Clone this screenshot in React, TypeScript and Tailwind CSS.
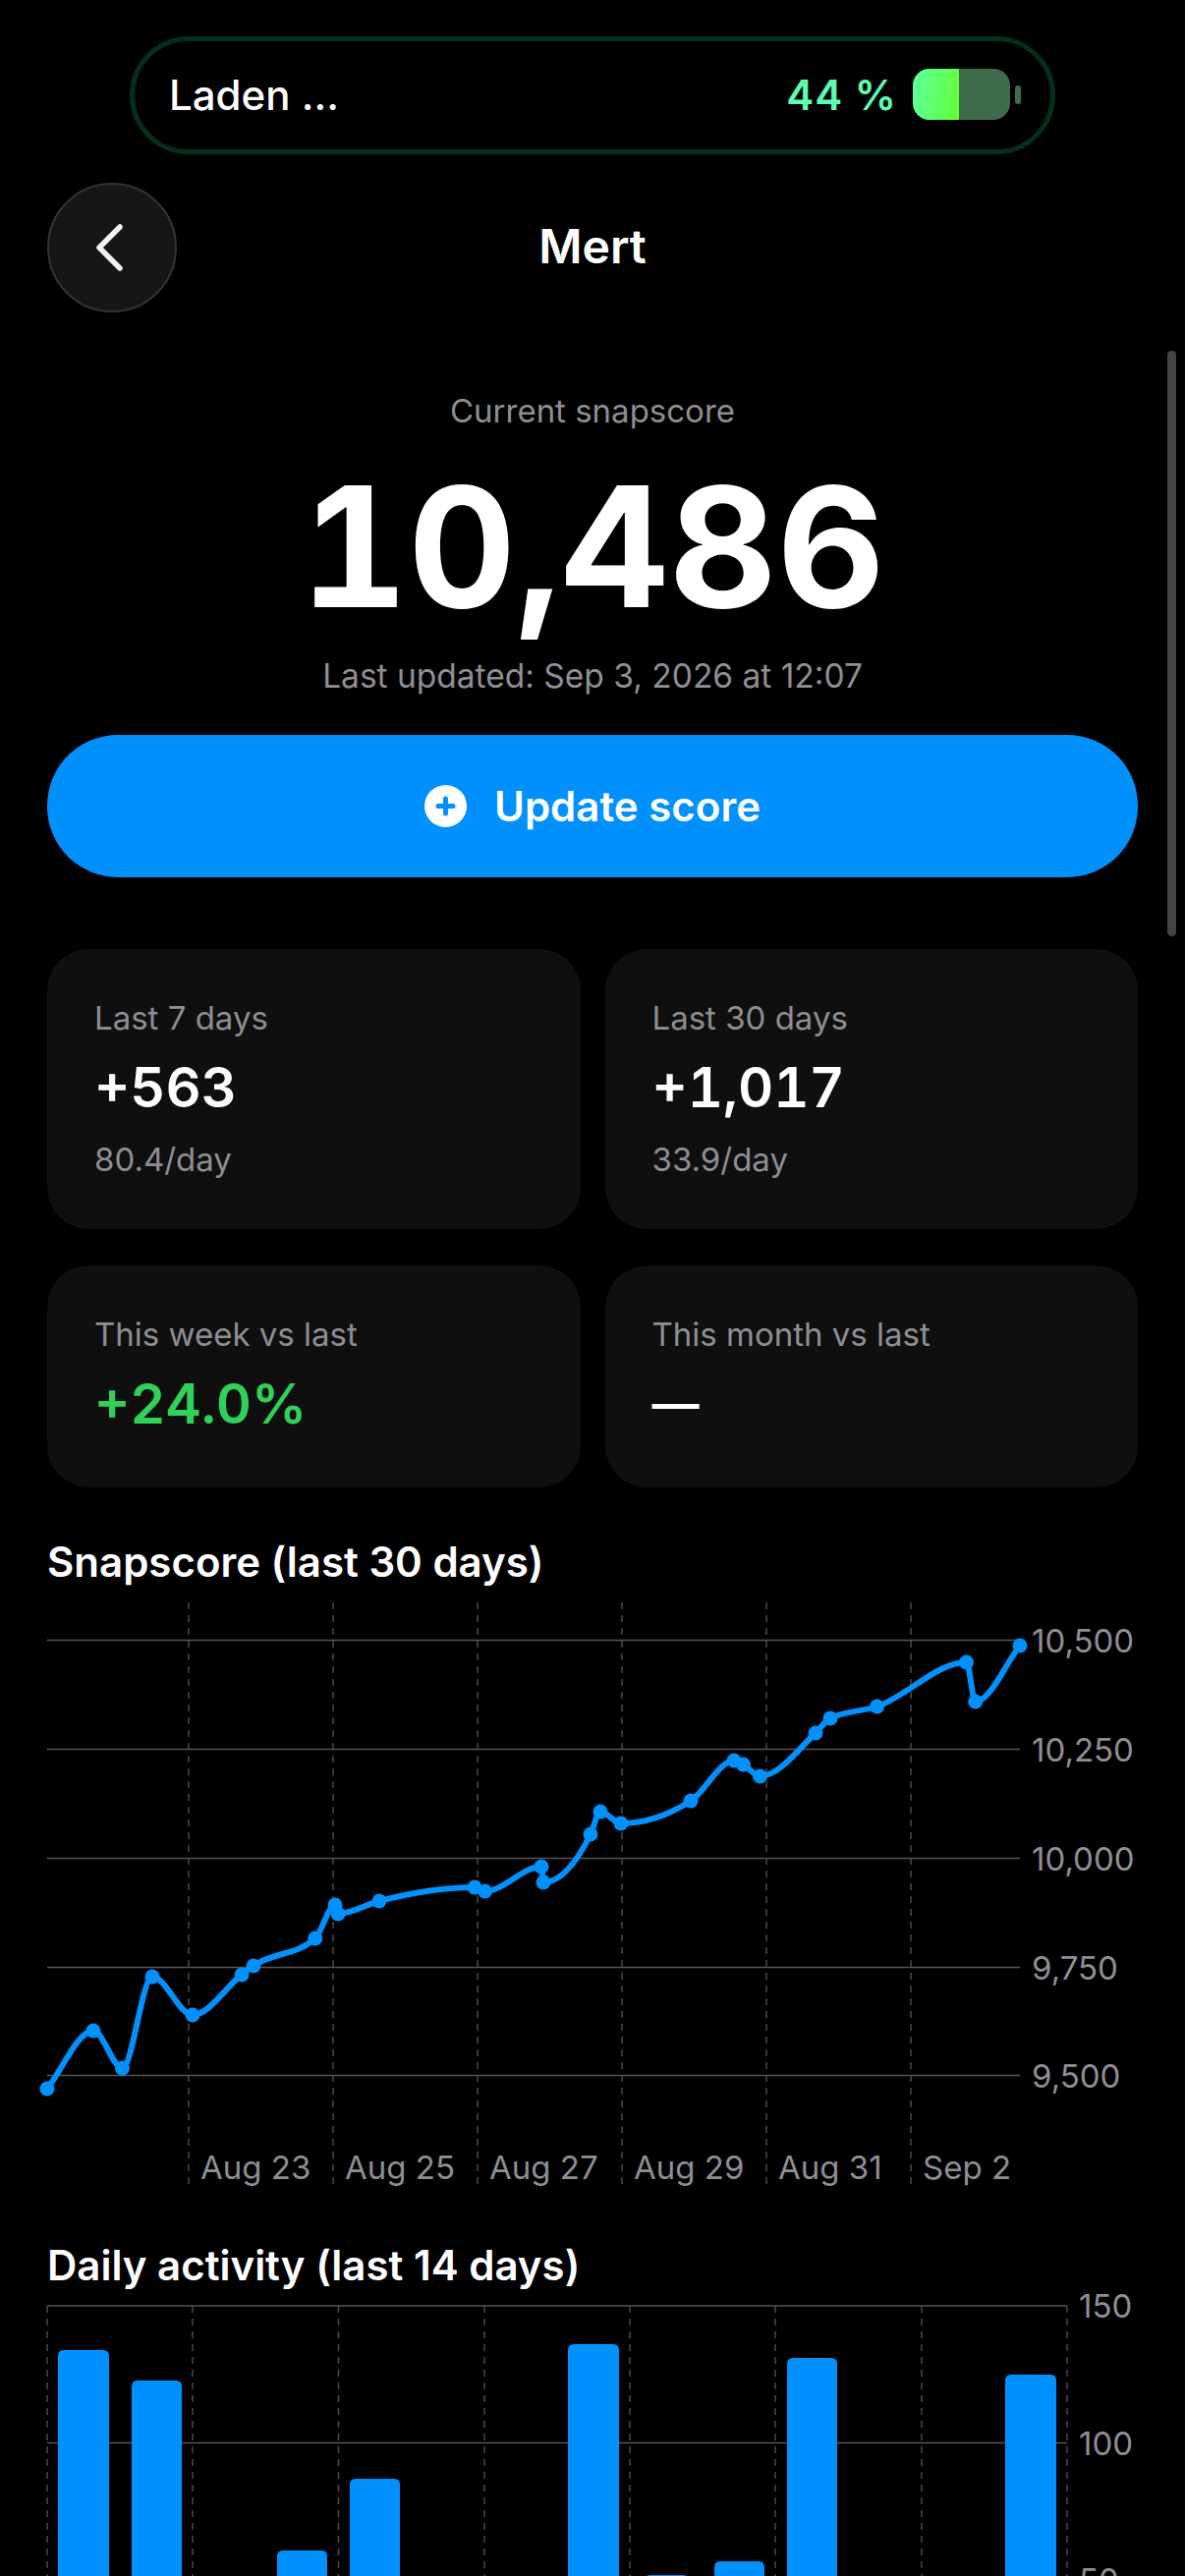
import React from "react";

const BLUE = "#0091ff";
const GRID = "#555555";
const DASH = "#4a4a4a";
const LABEL = "#8e8e93";

const points: [number, number][] = [
  [48, 2126], [95, 2067], [124.5, 2105], [155, 2012], [196, 2051], [246, 2010], [258, 2001],
  [320.7, 1973], [341, 1939], [344, 1948], [386, 1935], [483, 1921], [493.5, 1925], [551, 1900],
  [553, 1916], [601, 1867], [611, 1844], [632, 1856], [703, 1833], [747, 1792], [756.5, 1796],
  [773.5, 1808], [830, 1764], [845, 1749], [892.6, 1737], [983.5, 1692], [992.7, 1732], [1038, 1675],
];

const scoreTicks = [
  { y: 1669.5, label: "10,500" },
  { y: 1780.5, label: "10,250" },
  { y: 1891.5, label: "10,000" },
  { y: 2002.5, label: "9,750" },
  { y: 2112.5, label: "9,500" },
];

const dateTicks = [
  { x: 192, label: "Aug 23" },
  { x: 339, label: "Aug 25" },
  { x: 486, label: "Aug 27" },
  { x: 633, label: "Aug 29" },
  { x: 780, label: "Aug 31" },
  { x: 927, label: "Sep 2" },
];

const bars = [
  { x: 59, w: 52, top: 2392 },
  { x: 134, w: 51, top: 2423 },
  { x: 282, w: 51, top: 2596 },
  { x: 356, w: 51, top: 2523 },
  { x: 578, w: 52, top: 2386 },
  { x: 656, w: 45, top: 2621 },
  { x: 727, w: 51, top: 2607 },
  { x: 801, w: 51, top: 2400 },
  { x: 1023, w: 52, top: 2417 },
];

// same maths as d3 curveMonotoneX
function monotonePath(pts: [number, number][]) {
  const n = pts.length;
  const dx: number[] = [];
  const m: number[] = [];
  for (let i = 0; i < n - 1; i++) {
    dx[i] = pts[i + 1][0] - pts[i][0];
    m[i] = (pts[i + 1][1] - pts[i][1]) / dx[i];
  }
  const t: number[] = [m[0]];
  for (let i = 1; i < n - 1; i++) {
    if (m[i - 1] * m[i] <= 0) t[i] = 0;
    else {
      const p = (m[i - 1] * dx[i] + m[i] * dx[i - 1]) / (dx[i - 1] + dx[i]);
      t[i] = (Math.sign(m[i - 1]) + Math.sign(m[i])) * Math.min(Math.abs(m[i - 1]), Math.abs(m[i]), 0.5 * Math.abs(p));
    }
  }
  t[n - 1] = m[n - 2];
  let d = `M${pts[0][0]},${pts[0][1]}`;
  for (let i = 0; i < n - 1; i++) {
    const h = dx[i] / 3;
    d += `C${pts[i][0] + h},${pts[i][1] + t[i] * h} ${pts[i + 1][0] - h},${pts[i + 1][1] - t[i + 1] * h} ${pts[i + 1][0]},${pts[i + 1][1]}`;
  }
  return d;
}

function ScoreChart() {
  return (
    <svg viewBox="0 1625 1206 610" className="block w-full h-[610px] overflow-visible">
      {scoreTicks.map((t) => (
        <g key={t.label}>
          <line x1={48} x2={1038} y1={t.y} y2={t.y} stroke={GRID} strokeWidth={1.5} />
          <text x={1050} y={t.y + 12} fill={LABEL} fontSize={33}>{t.label}</text>
        </g>
      ))}
      {dateTicks.map((t) => (
        <g key={t.label}>
          <line x1={t.x} x2={t.x} y1={1631} y2={2226} stroke={DASH} strokeWidth={1.5} strokeDasharray="7 6" />
          <text x={t.x + 12} y={2218} fill={LABEL} fontSize={33}>{t.label}</text>
        </g>
      ))}
      <path d={monotonePath(points)} fill="none" stroke={BLUE} strokeWidth={6} />
      {points.map(([x, y]) => (
        <circle key={x} cx={x} cy={y} r={7.5} fill={BLUE} />
      ))}
    </svg>
  );
}

function ActivityChart() {
  return (
    <svg viewBox="0 2340 1206 300" className="block w-full h-[300px] overflow-visible">
      {[2347, 2486.5, 2626].map((y, i) => (
        <g key={y}>
          <line x1={48} x2={1086} y1={y} y2={y} stroke={GRID} strokeWidth={1.5} />
          <text x={1098} y={y + 12} fill={LABEL} fontSize={33}>{["150", "100", "50"][i]}</text>
        </g>
      ))}
      {[48, 196, 344.5, 493, 641, 789, 938, 1086].map((x) => (
        <line key={x} x1={x} x2={x} y1={2347} y2={2640} stroke={DASH} strokeWidth={1.5} strokeDasharray="7 6" />
      ))}
      {bars.map((b) => (
        <path
          key={b.x}
          d={`M${b.x},2640V${b.top + 6}Q${b.x},${b.top} ${b.x + 6},${b.top}H${b.x + b.w - 6}Q${b.x + b.w},${b.top} ${b.x + b.w},${b.top + 6}V2640Z`}
          fill={BLUE}
        />
      ))}
    </svg>
  );
}

function StatCard({ label, value, sub, green }: { label: string; value: string; sub?: string; green?: boolean }) {
  return (
    <div className={`rounded-[42px] bg-[#0f0f0f] pl-[48px] pt-[50px] ${sub ? "h-[285px]" : "h-[226px]"}`}>
      <div className="text-[33px] leading-[40px] text-[#8e8e93]">{label}</div>
      <div
        className={`mt-[17px] leading-[68px] font-semibold tabular-nums ${value === "—" ? "text-[48px]" : "text-[56px]"} ${
          green ? "text-[#30d158]" : "text-white"
        }`}
      >
        {value}
      </div>
      {sub && <div className="mt-[19px] text-[33px] leading-[40px] text-[#8e8e93]">{sub}</div>}
    </div>
  );
}

export default function App() {
  return (
    <div className="relative h-[2622px] w-[1206px] overflow-hidden bg-black font-['Inter',sans-serif] text-white">
      <div className="pt-[37px] flex justify-center">
        <div className="flex h-[120px] w-[942px] items-center rounded-[60px] border-[5px] border-[#03301a] pb-[2px] pl-[35px] pr-[30px]">
          <span className="text-[42px] font-medium">Laden ...</span>
          <span className="ml-auto text-[42px] font-semibold tracking-[1px] text-[#5dfdb0]">44 %</span>
          <div className="ml-[16px] flex items-center">
            <div className="flex h-[52px] w-[99px] overflow-hidden rounded-[17px] bg-[#3f6b4d]">
              <div className="h-full w-[47px] bg-[linear-gradient(100deg,#5dffa0,#63ff35)]" />
            </div>
            <div className="ml-[5px] h-[19px] w-[6px] rounded-full bg-[#3f6b4d]" />
          </div>
        </div>
      </div>

      <div className="relative mt-[29px] flex h-[132px] items-center justify-center px-[48px]">
        <button className="absolute left-[48px] top-0 flex h-[132px] w-[132px] items-center justify-center rounded-full border-2 border-[#333333] bg-[#161616]">
          <svg width="30" height="50" viewBox="0 0 30 50" fill="none" className="mr-[6px]">
            <path d="M26 4 L5 25 L26 46" stroke="#f2f2f2" strokeWidth="5.5" strokeLinecap="round" strokeLinejoin="round" />
          </svg>
        </button>
        <h1 className="mb-[2px] text-[48px] font-semibold">Mert</h1>
      </div>

      <div className="mt-[80px] text-center text-[33px] leading-[40px] text-[#8e8e93]">Current snapscore</div>
      <div className="mt-[15px] text-center text-[170px] leading-[206px] font-bold tabular-nums">10,486</div>
      <div className="mt-[9px] text-center text-[33.5px] leading-[40px] text-[#8e8e93]">Last updated: Sep 3, 2026 at 12:07</div>

      <button className="mx-[48px] mt-[40px] flex h-[145px] w-[1110px] items-center justify-center gap-[28px] rounded-[72px] bg-[#0091ff]">
        <svg width="43" height="43" viewBox="0 0 43 43">
          <circle cx="21.5" cy="21.5" r="21.5" fill="#fff" />
          <path d="M21.5 14v15M14 21.5h15" stroke="#0091ff" strokeWidth="5" strokeLinecap="round" />
        </svg>
        <span className="text-[42px] font-semibold">Update score</span>
      </button>

      <div className="mx-[48px] mt-[73px] grid grid-cols-2 gap-x-[25px] gap-y-[37px]">
        <StatCard label="Last 7 days" value="+563" sub="80.4/day" />
        <StatCard label="Last 30 days" value="+1,017" sub="33.9/day" />
        <StatCard label="This week vs last" value="+24.0%" green />
        <StatCard label="This month vs last" value="—" />
      </div>

      <h2 className="mx-[48px] mt-[51px] text-[42px] leading-[50px] font-semibold">Snapscore (last 30 days)</h2>
      <div className="mt-[10px]">
        <ScoreChart />
      </div>

      <h2 className="mx-[48px] mt-[46px] text-[42px] leading-[50px] font-semibold">Daily activity (last 14 days)</h2>
      <div className="mt-[9px]">
        <ActivityChart />
      </div>

      <div className="absolute left-[1188px] top-[357px] h-[596px] w-[9px] rounded-full bg-[#444444]" />
    </div>
  );
}
